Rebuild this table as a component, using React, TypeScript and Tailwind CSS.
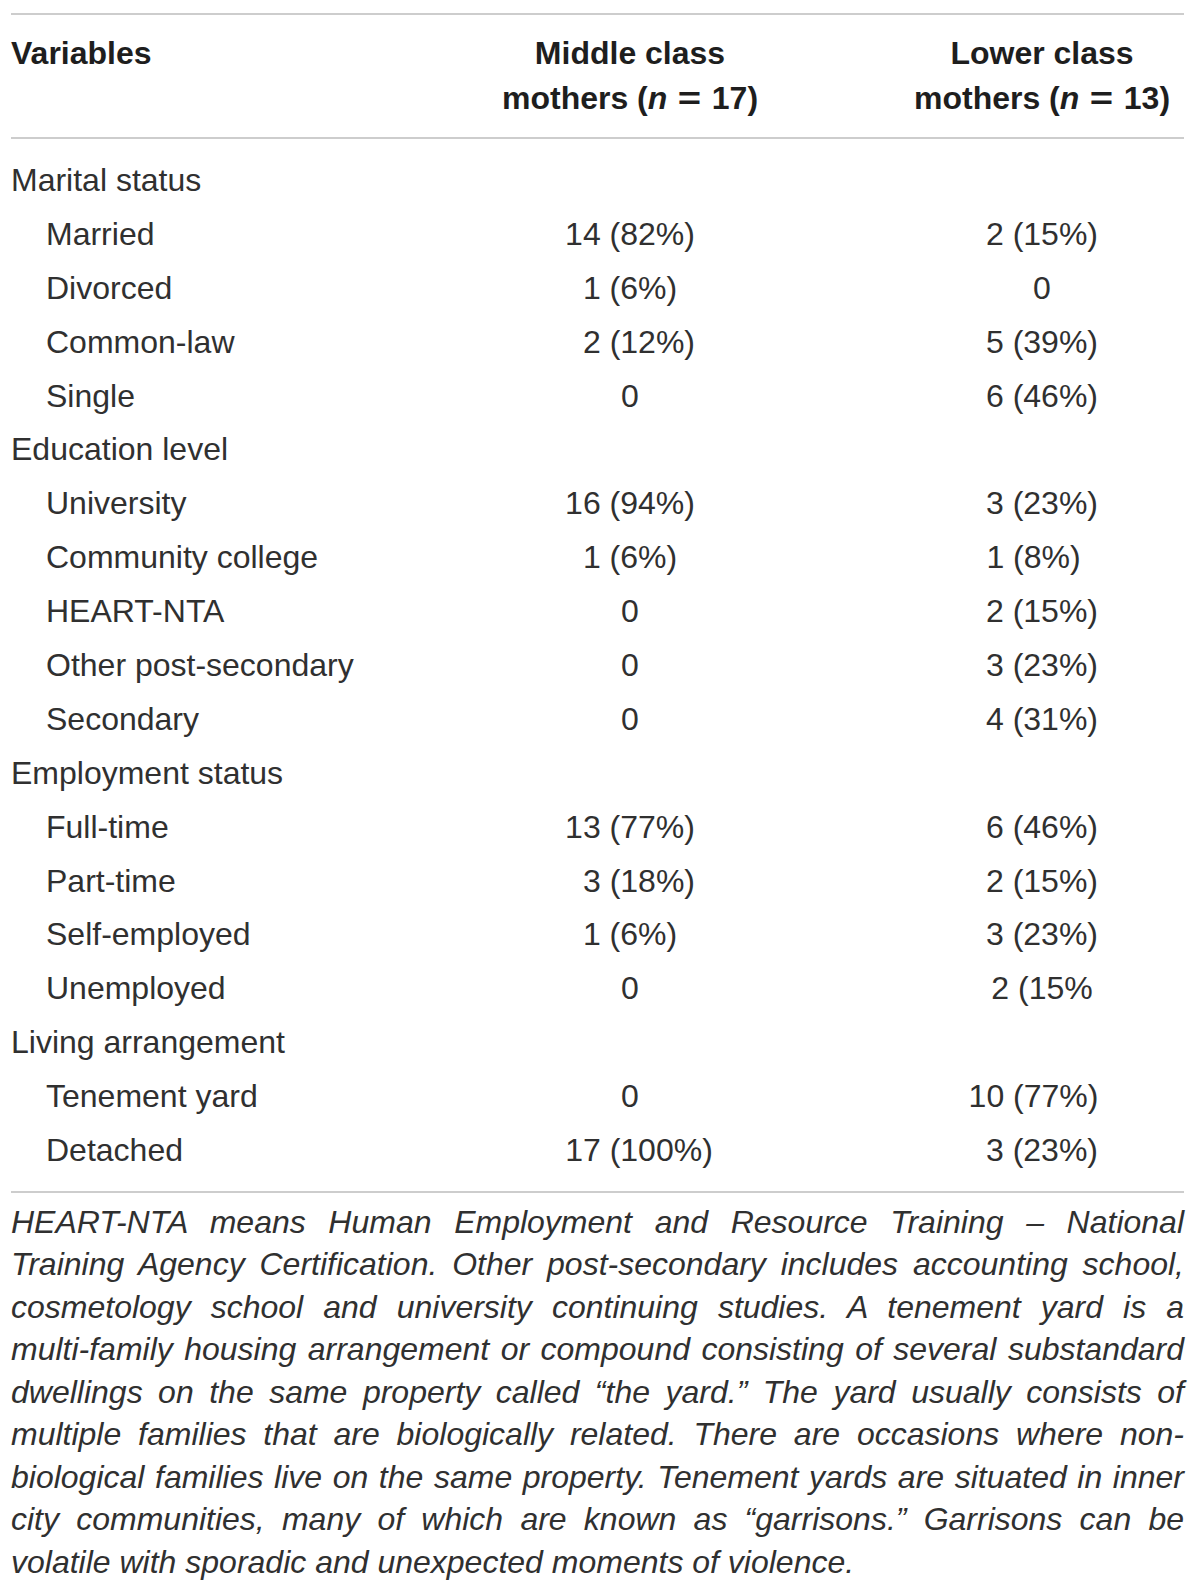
import React from 'react'

type Row = {
  label: string
  group?: boolean
  mid?: string
  low?: string
  midShift?: 'r' | 'l'
  lowShift?: 'r' | 'l'
}

const rows: Row[] = [
  { label: 'Marital status', group: true },
  { label: 'Married', mid: '14 (82%)', low: '2 (15%)' },
  { label: 'Divorced', mid: '1 (6%)', low: '0' },
  { label: 'Common-law', mid: '2 (12%)', low: '5 (39%)', midShift: 'r' },
  { label: 'Single', mid: '0', low: '6 (46%)' },
  { label: 'Education level', group: true },
  { label: 'University', mid: '16 (94%)', low: '3 (23%)' },
  { label: 'Community college', mid: '1 (6%)', low: '1 (8%)', lowShift: 'l' },
  { label: 'HEART-NTA', mid: '0', low: '2 (15%)' },
  { label: 'Other post-secondary', mid: '0', low: '3 (23%)' },
  { label: 'Secondary', mid: '0', low: '4 (31%)' },
  { label: 'Employment status', group: true },
  { label: 'Full-time', mid: '13 (77%)', low: '6 (46%)' },
  { label: 'Part-time', mid: '3 (18%)', low: '2 (15%)', midShift: 'r' },
  { label: 'Self-employed', mid: '1 (6%)', low: '3 (23%)' },
  { label: 'Unemployed', mid: '0', low: '2 (15%' },
  { label: 'Living arrangement', group: true },
  { label: 'Tenement yard', mid: '0', low: '10 (77%)', lowShift: 'l' },
  { label: 'Detached', mid: '17 (100%)', low: '3 (23%)', midShift: 'r' },
]

const note = [
  'HEART-NTA means Human Employment and Resource Training – National',
  'Training Agency Certification. Other post-secondary includes accounting school,',
  'cosmetology school and university continuing studies. A tenement yard is a',
  'multi-family housing arrangement or compound consisting of several substandard',
  'dwellings on the same property called “the yard.” The yard usually consists of',
  'multiple families that are biologically related. There are occasions where non-',
  'biological families live on the same property. Tenement yards are situated in inner',
  'city communities, many of which are known as “garrisons.” Garrisons can be',
  'volatile with sporadic and unexpected moments of violence.',
]

function shiftClass(s?: 'r' | 'l') {
  if (s === 'r') return 'pl-[18px]'
  if (s === 'l') return 'pr-[17px]'
  return ''
}

function Eq() {
  return <span className="inline-block px-[4px] scale-x-125">=</span>
}

export default function App() {
  return (
    <div className="w-[1200px] min-h-[1593px] bg-white pt-[13px] pl-[11px] pr-[16px] font-['Liberation_Sans',Arial,sans-serif] text-[32px] text-[#303030]">
      <div className="border-t-2 border-[#cdcdcd]">
        {/* header */}
        <div className="grid grid-cols-[349px_540px_284px] pt-[16px] pb-[16px] leading-[45px] font-bold text-[#1e1e1e]">
          <div>Variables</div>
          <div className="text-center">
            Middle class
            <br />
            mothers (<i>n</i> <Eq /> 17)
          </div>
          <div className="text-center">
            Lower class
            <br />
            mothers (<i>n</i> <Eq /> 13)
          </div>
        </div>

        <div className="border-t-2 border-[#cdcdcd] py-[14px]">
          {rows.map(r => (
            <div key={r.label} className="grid grid-cols-[349px_540px_284px] h-[53.9px] items-center leading-none">
              <div className={`whitespace-nowrap ${r.group ? '' : 'pl-[35px]'}`}>{r.label}</div>
              <div className={`text-center whitespace-nowrap ${shiftClass(r.midShift)}`}>{r.mid}</div>
              <div className={`text-center whitespace-nowrap ${shiftClass(r.lowShift)}`}>{r.low}</div>
            </div>
          ))}
        </div>

        <div className="border-t-2 border-[#cdcdcd] pt-[8px] italic leading-[42.5px]">
          {note.map((line, i) => (
            <div
              key={i}
              className={`whitespace-nowrap ${i < note.length - 1 ? 'text-justify [text-align-last:justify]' : ''}`}
            >
              {line}
            </div>
          ))}
        </div>
      </div>
    </div>
  )
}
